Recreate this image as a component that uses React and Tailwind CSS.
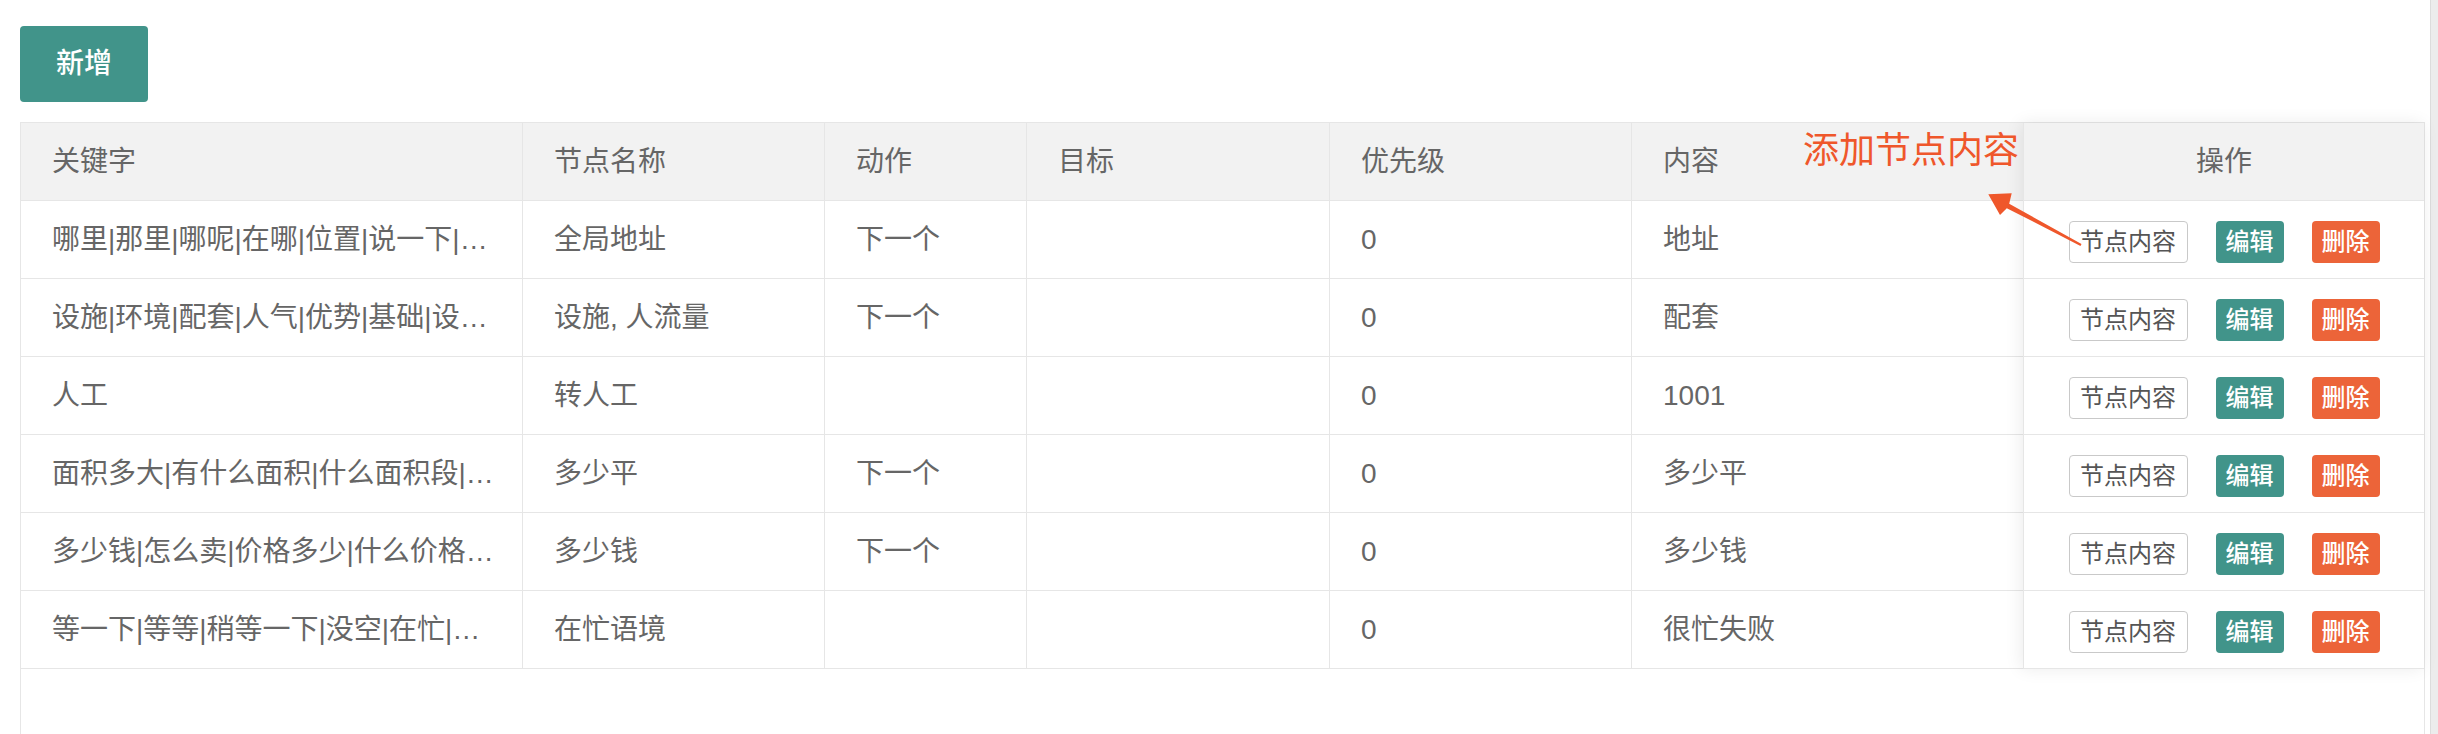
const COLS = [
  { title: "关键字", w: "w-[502px]" },
  { title: "节点名称", w: "w-[302px]" },
  { title: "动作", w: "w-[202px]" },
  { title: "目标", w: "w-[303px]" },
  { title: "优先级", w: "w-[302px]" },
  { title: "内容", w: "w-[391px]" },
];

const ROWS = [
  ["哪里|那里|哪呢|在哪|位置|说一下|…", "全局地址", "下一个", "", "0", "地址"],
  ["设施|环境|配套|人气|优势|基础|设…", "设施, 人流量", "下一个", "", "0", "配套"],
  ["人工", "转人工", "", "", "0", "1001"],
  ["面积多大|有什么面积|什么面积段|…", "多少平", "下一个", "", "0", "多少平"],
  ["多少钱|怎么卖|价格多少|什么价格…", "多少钱", "下一个", "", "0", "多少钱"],
  ["等一下|等等|稍等一下|没空|在忙|…", "在忙语境", "", "", "0", "很忙失败"],
];

function Cell({ w, last, children }) {
  return (
    <div
      className={`${w} h-full flex items-center pl-[31px] pr-[30px] overflow-hidden whitespace-nowrap ${
        last ? "" : "border-r border-[#e6e6e6]"
      }`}
    >
      {children}
    </div>
  );
}

export default function App() {
  return (
    <div className="flex h-[734px] w-full overflow-hidden bg-white text-[#666] font-['Liberation_Sans','Noto_Sans_CJK_SC',sans-serif]">
      <div className="relative flex-1 pl-[20px] pt-[26px]">
        <button className="h-[76px] px-[36px] rounded-[4px] bg-[#41948a] text-white text-[28px] font-medium leading-none">
          新增
        </button>

        {/* table */}
        <div className="mt-[20px] w-[2405px] h-[640px] border-l border-r border-t border-[#e6e6e6] flex items-start">
          {/* main columns */}
          <div className="w-[2002px] flex flex-col text-[28px]">
            <div className="h-[78px] flex bg-[#f2f2f2] border-b border-[#e6e6e6]">
              {COLS.map((c, i) => (
                <Cell key={c.title} w={c.w} last={i === COLS.length - 1}>
                  {c.title}
                </Cell>
              ))}
            </div>
            {ROWS.map((r, ri) => (
              <div key={ri} className="h-[78px] flex border-b border-[#e6e6e6]">
                {r.map((v, i) => (
                  <Cell key={i} w={COLS[i].w} last={i === COLS.length - 1}>
                    {v}
                  </Cell>
                ))}
              </div>
            ))}
          </div>

          {/* fixed right column */}
          <div className="relative z-10 w-[401px] flex flex-col bg-white border-l border-[#e6e6e6] shadow-[-2px_0_16px_rgba(0,0,0,0.08)]">
            <div className="h-[78px] flex items-center justify-center bg-[#f2f2f2] border-b border-[#e6e6e6] text-[28px]">
              操作
            </div>
            {ROWS.map((_, ri) => (
              <div
                key={ri}
                className="h-[78px] pt-[4px] flex items-center justify-center gap-[28px] border-b border-[#e6e6e6] text-[24px] leading-none"
              >
                <button className="h-[42px] w-[119px] rounded-[4px] border border-[#c9c9c9] bg-white text-[#555]">
                  节点内容
                </button>
                <button className="h-[42px] w-[68px] rounded-[4px] bg-[#41948a] text-white font-medium">
                  编辑
                </button>
                <button className="h-[42px] w-[68px] rounded-[4px] bg-[#ec6439] text-white font-medium">
                  删除
                </button>
              </div>
            ))}
          </div>
        </div>

        {/* annotation */}
        <div className="absolute left-[1803px] top-[133px] z-20 text-[36px] leading-none text-[#ef572b] whitespace-nowrap">
          添加节点内容
        </div>
        <svg
          className="absolute left-[1980px] top-[185px] z-20"
          width="110"
          height="70"
          viewBox="0 0 110 70"
        >
          <polygon
            points="8.3,9.3 31.7,8.3 29.2,18.8 101.5,59.1 100.5,60.9 26.8,23.2 20,30"
            fill="#ef572b"
          />
        </svg>
      </div>

      {/* page scrollbar track */}
      <div className="w-[11px] h-full pl-[3px] bg-white">
        <div className="h-full w-full border-l border-[#dcdcdc] bg-[#ececec]" />
      </div>
    </div>
  );
}
